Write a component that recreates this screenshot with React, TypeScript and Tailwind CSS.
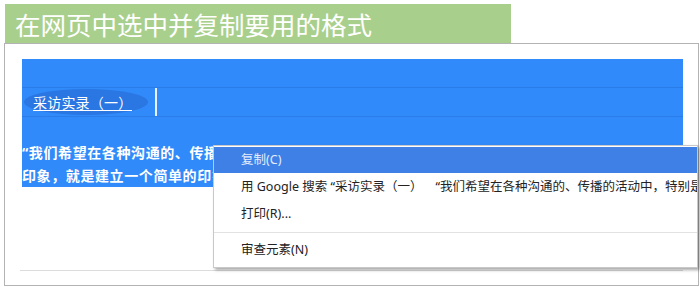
const menuFont = {
  fontFamily: '"Noto Sans", "Noto Sans CJK SC", sans-serif',
};

function ContextMenu() {
  return (
    <div
      className="absolute left-[213px] top-[145px] w-[485px] h-[123px] bg-white border border-[#c9c9c9] shadow-[2px_2px_3px_rgba(0,0,0,0.35)] pt-[1px] overflow-hidden text-[12.5px] text-[#222]"
      style={menuFont}
    >
      <div className="h-[26px] bg-[#3e80e6] text-[#e4edff] pl-[27px] flex items-center">
        复制(C)
      </div>
      <div className="h-[28px] pl-[27px] flex items-center whitespace-nowrap">
        用 Google 搜索 “采访实录（一）&nbsp;&nbsp;&nbsp;&nbsp;“我们希望在各种沟通的、传播的活动中，特别是在品牌传播中”
      </div>
      <div className="h-[27px] pl-[27px] flex items-center">打印(R)...</div>
      <div className="my-[4px] h-px bg-[#e2e2e2]" />
      <div className="h-[27px] pl-[27px] flex items-center">审查元素(N)</div>
    </div>
  );
}

export default function App() {
  return (
    <div
      className="relative w-[700px] h-[287px] bg-white pt-[4px] overflow-hidden"
      style={{ fontFamily: '"Noto Sans CJK SC", sans-serif' }}
    >
      <div className="ml-[5px] w-[506px] h-[39px] bg-[#a9cf8d] text-white text-[25.5px] leading-[39px] pl-[10px]">
        在网页中选中并复制要用的格式
      </div>
      <div className="ml-[4px] w-[695px] h-[243px] border border-[#b3b3b3]">
        <div className="ml-[17px] mt-[15px] w-[661px] bg-[#318afa]">
          <div className="h-[28px]" />
          <div className="h-[30px] flex border-t border-b border-[#2a7ce9]">
            <div className="w-[135px] h-full flex items-center border-r-2 border-[#e8f1ff]">
              <div className="ml-[2px] h-[26px] w-[124px] rounded-[50%] bg-[#2a76e2] flex items-center">
                <span className="ml-[9px] text-white text-[14px] leading-[16px] border-b border-white tracking-[0.2px]">
                  采访实录（一）
                </span>
              </div>
            </div>
          </div>
          <div className="h-[24px]" />
        </div>
        <div className="ml-[17px] w-[661px] bg-[#318afa] text-white font-bold text-[14px] leading-[23px] tracking-[0.6px] overflow-hidden">
          <div className="whitespace-nowrap">
            <span style={menuFont}>“</span>我们希望在各种沟通的、传播的活动中，特别是在品牌传播中给人留下
          </div>
          <div className="whitespace-nowrap">印象，就是建立一个简单的印象。</div>
        </div>
        <div className="ml-[15px] mt-[83px] w-[663px] h-px bg-[#dcdcdc]" />
      </div>
      <ContextMenu />
    </div>
  );
}
